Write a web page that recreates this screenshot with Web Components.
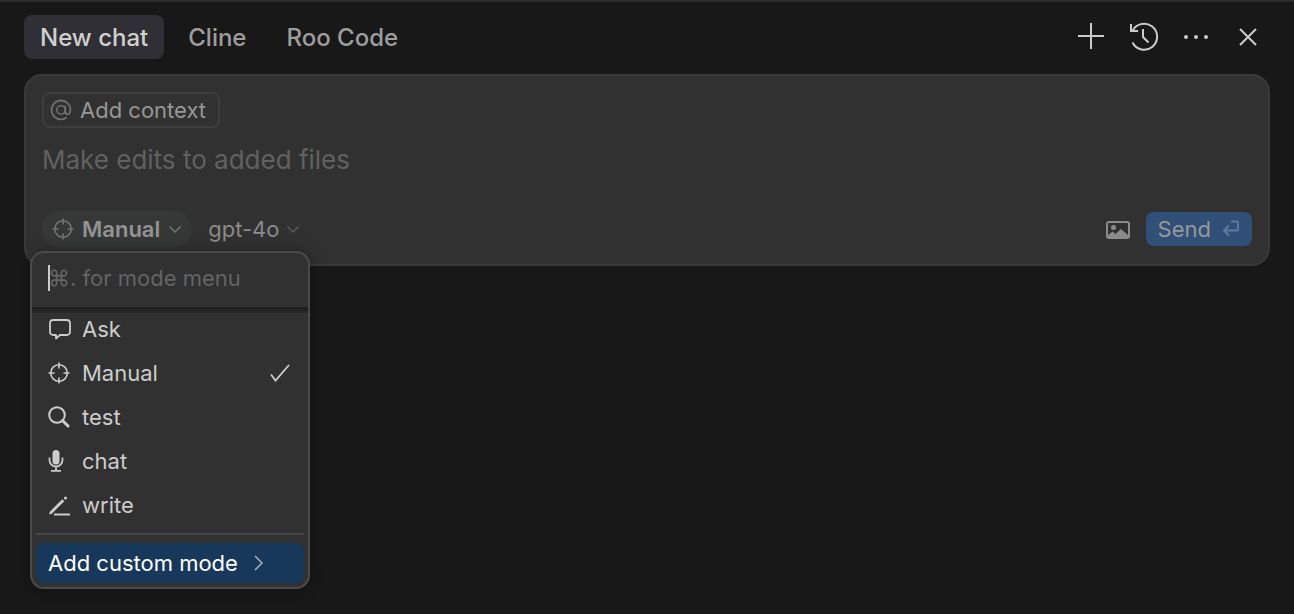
<!DOCTYPE html>
<html lang="en">
<head>
<meta charset="utf-8">
<title>Chat</title>
<style>
  html { background: #181818; }
  body { margin: 0; color: #cccccc; font: 400 22px/28px Inter, "Noto Sans", sans-serif; }
</style>
</head>
<body>
<chat-panel></chat-panel>
<script>
const icons = {
  plus: [28, '<path d="M13 0v26M0 13h26" stroke-width="2"/>'],
  history: [30, '<path d="M3.500 20.500A13 13 0 1 0 3.200 9.500" stroke-width="2"/><path d="M2 2v7h7" stroke-width="2"/><path d="M14 7v8l5.500 5.500" stroke-width="2"/>'],
  more: [28, '<g fill="currentColor" stroke="none"><circle cx="4" cy="14" r="2"/><circle cx="14" cy="14" r="2"/><circle cx="24" cy="14" r="2"/></g>'],
  close: [28, '<path d="M6 6l16 16M22 6L6 22" stroke-width="2"/>'],
  at: [22, '<circle cx="11" cy="11" r="4.200"/><path d="M15.200 6.800v5.400q0 3 2.500 3t2.700-4.200a9.400 9.400 0 1 0-3.800 7.500" stroke-width="1.800"/>'],
  target: [22, '<circle cx="11" cy="11" r="8.300"/><path d="M11 .5v6M11 15.500v6M.5 11h6M15.500 11h6"/>'],
  chat: [24, '<path d="M5.500 3h13q3.500 0 3.500 3.500v8q0 3.500-3.500 3.500h-6.500l-4 3.500v-3.500H5.500q-3.500 0-3.500-3.500v-8q0-3.500 3.500-3.500z" stroke-width="1.800" stroke-linejoin="round"/>'],
  search: [22, '<circle cx="9" cy="9" r="7.800" stroke-width="2"/><path d="M14.500 14.500l5.500 5.500" stroke-width="3" stroke-linecap="round"/>'],
  mic: [22, '<rect x="4.500" y="0" width="7" height="14.500" rx="3.500" fill="currentColor" stroke="none"/><path d="M1.500 7.500v2.500a6.500 6.500 0 0 0 13 0V7.500M8 16.500v4M3 20.800h10" stroke-width="1.800"/>'],
  write: [22, '<path d="M6 20.500h16" stroke-width="2"/><path d="M1 20.500l.8-2.800L14.300 5.200l2 2L3.800 19.700z" fill="currentColor" stroke="none"/><circle cx="17.500" cy="4" r="1.600" fill="currentColor" stroke="none"/>'],
  check: [22, '<path d="M1 12.500l4.500 6L19 3" stroke-width="1.800"/>'],
  down: [14, '<path d="M1.500 4.500L7 10l5.500-5.500" stroke-width="1.500"/>'],
  right: [16, '<path d="M5 1L12 8l-7 7" stroke-width="1.500"/>'],
  picture: [24, '<rect x="1" y="5" width="22" height="16" rx="2" stroke-width="2"/><circle cx="7.500" cy="10.500" r="2.500" fill="currentColor" stroke="none"/><path d="M1 19l5.500-4.500 3 2.500 5.500-5 8 7v2H1z" fill="currentColor" stroke="none"/>'],
  enter: [18, '<path d="M9 1.500h5.500q1.500 0 1.500 1.500v6q0 1.500-1.500 1.500H2M7 5.500l-5 5 5 5" stroke-width="2"/>']
};

class UiIcon extends HTMLElement {
  connectedCallback() {
    const [size, shape] = icons[this.getAttribute('name')];
    this.attachShadow({ mode: 'open' }).innerHTML = `
      <style>:host { display: block; flex: none; } svg { display: block; fill: none; stroke: currentColor; stroke-width: 1.6; }</style>
      <svg width="${size}" height="${size}" viewBox="0 0 ${size} ${size}" aria-hidden="true">${shape}</svg>`;
  }
}
customElements.define('ui-icon', UiIcon);

class IconButton extends HTMLElement {
  connectedCallback() {
    this.attachShadow({ mode: 'open' }).innerHTML = `
      <style>
        :host { display: block; }
        button { display: grid; place-items: center; width: 32px; height: 32px; padding: 0; border: 0; background: none; color: inherit; }
      </style>
      <button aria-label="${this.getAttribute('label')}"><ui-icon name="${this.getAttribute('icon')}"></ui-icon></button>`;
  }
}
customElements.define('icon-button', IconButton);

class PanelTab extends HTMLElement {
  connectedCallback() {
    this.attachShadow({ mode: 'open' }).innerHTML = `
      <style>
        :host { display: block; }
        button { height: 44px; padding: 2px 16px 0; border: 0; border-radius: 8px; background: none; color: #9d9d9d; font: inherit; font-size: 24px; font-weight: 500; }
        :host([active]) button { background: #302f35; color: #d0d0d0; }
      </style>
      <button><slot></slot></button>`;
  }
}
customElements.define('panel-tab', PanelTab);

class TabBar extends HTMLElement {
  connectedCallback() {
    this.attachShadow({ mode: 'open' }).innerHTML = `
      <style>
        :host { display: flex; align-items: center; justify-content: space-between; padding: 0 6px 0 0; }
        nav { display: flex; gap: 8px; }
        .actions { display: flex; gap: 20px; }
      </style>
      <nav><slot></slot></nav>
      <div class="actions"><slot name="action"></slot></div>`;
  }
}
customElements.define('tab-bar', TabBar);

class ModeItem extends HTMLElement {
  connectedCallback() {
    this.attachShadow({ mode: 'open' }).innerHTML = `
      <style>
        :host { display: block; }
        button { display: flex; align-items: center; width: 100%; height: 44px; padding: 0 16px; border: 0; background: none; color: inherit; font: inherit; text-align: left; }
        .icon { width: 34px; }
        .label { flex: 1; }
      </style>
      <button role="menuitemradio" aria-checked="${this.hasAttribute('checked')}">
        <span class="icon"><ui-icon name="${this.getAttribute('icon')}"></ui-icon></span>
        <span class="label"><slot></slot></span>
        ${this.hasAttribute('checked') ? '<ui-icon name="check"></ui-icon>' : ''}
      </button>`;
  }
}
customElements.define('mode-item', ModeItem);

class ModeMenu extends HTMLElement {
  connectedCallback() {
    this.attachShadow({ mode: 'open' }).innerHTML = `
      <style>
        :host { display: block; box-sizing: border-box; border: 2px solid #4a4a4a; border-radius: 14px; background: #313131; color: #cccccc; box-shadow: 0 0 16px #00000050; overflow: hidden; }
        .filter { display: flex; align-items: center; height: 54px; padding: 0 16px 4px; box-sizing: border-box; }
        .filter::before { content: ""; flex: none; width: 2px; height: 26px; margin-right: -2px; background: #cccccc; }
        input { width: 100%; min-width: 0; height: 28px; padding: 0; border: 0; outline: 0; background: none; color: inherit; font: inherit; }
        input::placeholder { color: #646464; opacity: 1; }
        .list { padding-bottom: 6px; background: linear-gradient(#1e1e1e, #292929 6px, #313131 6px); }
        footer { margin: 0 4px; padding: 8px 0 4px; border-top: 2px solid #454545; }
        .add { display: flex; align-items: center; gap: 12px; width: 100%; height: 40px; padding: 0 12px; border: 0; border-radius: 8px; background: #17385b; color: #ffffff; font: inherit; }
        .add ui-icon { color: #a5b1bf; }
      </style>
      <div class="filter"><input aria-label="Filter modes" placeholder="⌘. for mode menu"></div>
      <div class="list" role="menu"><slot></slot></div>
      <footer><button class="add">Add custom mode<ui-icon name="right"></ui-icon></button></footer>`;
  }
}
customElements.define('mode-menu', ModeMenu);

class ChatComposer extends HTMLElement {
  connectedCallback() {
    this.attachShadow({ mode: 'open' }).innerHTML = `
      <style>
        :host { display: block; padding: 16px 16px 17px; border: 2px solid #393939; border-radius: 18px; background: #313131; color: #8b8b8b; }
        button { font: inherit; color: inherit; }
        .context { display: flex; align-items: center; gap: 8px; height: 36px; padding: 0 12px 0 6px; border: 2px solid #3e3e3e; border-radius: 8px; background: none; color: #979797; }
        .context ui-icon { color: #707070; }
        textarea { display: block; box-sizing: border-box; width: 100%; height: 83px; padding: 16px 0; border: 0; outline: 0; resize: none; overflow: hidden; background: none; color: inherit; font: inherit; font-size: 26px; line-height: 32px; }
        textarea::placeholder { color: #616161; opacity: 1; }
        .row { display: flex; align-items: center; gap: 16px; }
        .mode { position: relative; }
        .pill { display: flex; align-items: center; gap: 8px; height: 36px; padding: 0 10px; border: 0; border-radius: 18px; background: #363838; color: #737373; font-weight: 600; }
        .pill span { color: #939393; }
        .menu { position: absolute; top: 40px; left: -12px; width: 280px; }
        .model { display: flex; align-items: center; gap: 6px; color: #5c5c5c; }
        select { appearance: none; padding: 0; border: 0; background: none; color: #8b8b8b; font: inherit; }
        .end { display: flex; align-items: center; gap: 12px; margin-left: auto; }
        .send { display: flex; align-items: center; gap: 11px; height: 34px; padding: 0 12px; border: 0; border-radius: 8px; background: #315078; color: #989898; }
        .send ui-icon { color: #607a9a; }
      </style>
      <button class="context"><ui-icon name="at"></ui-icon>Add context</button>
      <textarea aria-label="Message" placeholder="Make edits to added files"></textarea>
      <div class="row">
        <div class="mode">
          <button class="pill" aria-haspopup="menu" aria-expanded="true"><ui-icon name="target"></ui-icon><span>Manual</span><ui-icon name="down"></ui-icon></button>
          <div class="menu"><slot></slot></div>
        </div>
        <label class="model"><select aria-label="Model"><option>gpt-4o</option></select><ui-icon name="down"></ui-icon></label>
        <div class="end">
          <icon-button icon="picture" label="Attach image"></icon-button>
          <button class="send">Send<ui-icon name="enter"></ui-icon></button>
        </div>
      </div>`;
  }
}
customElements.define('chat-composer', ChatComposer);

class ChatPanel extends HTMLElement {
  connectedCallback() {
    this.attachShadow({ mode: 'open' }).innerHTML = `
      <style>
        :host { display: flex; flex-direction: column; gap: 15px; box-sizing: border-box; min-height: 100vh; padding: 13px 24px; border-top: 2px solid #2b2b2b; }
      </style>
      <tab-bar>
        <panel-tab active>New chat</panel-tab><panel-tab>Cline</panel-tab><panel-tab>Roo Code</panel-tab>
        <icon-button slot="action" icon="plus" label="New chat"></icon-button>
        <icon-button slot="action" icon="history" label="History"></icon-button>
        <icon-button slot="action" icon="more" label="More actions"></icon-button>
        <icon-button slot="action" icon="close" label="Close"></icon-button>
      </tab-bar>
      <chat-composer>
        <mode-menu>
          <mode-item icon="chat">Ask</mode-item>
          <mode-item icon="target" checked>Manual</mode-item>
          <mode-item icon="search">test</mode-item>
          <mode-item icon="mic">chat</mode-item>
          <mode-item icon="write">write</mode-item>
        </mode-menu>
      </chat-composer>`;
  }
}
customElements.define('chat-panel', ChatPanel);
</script>
</body>
</html>
